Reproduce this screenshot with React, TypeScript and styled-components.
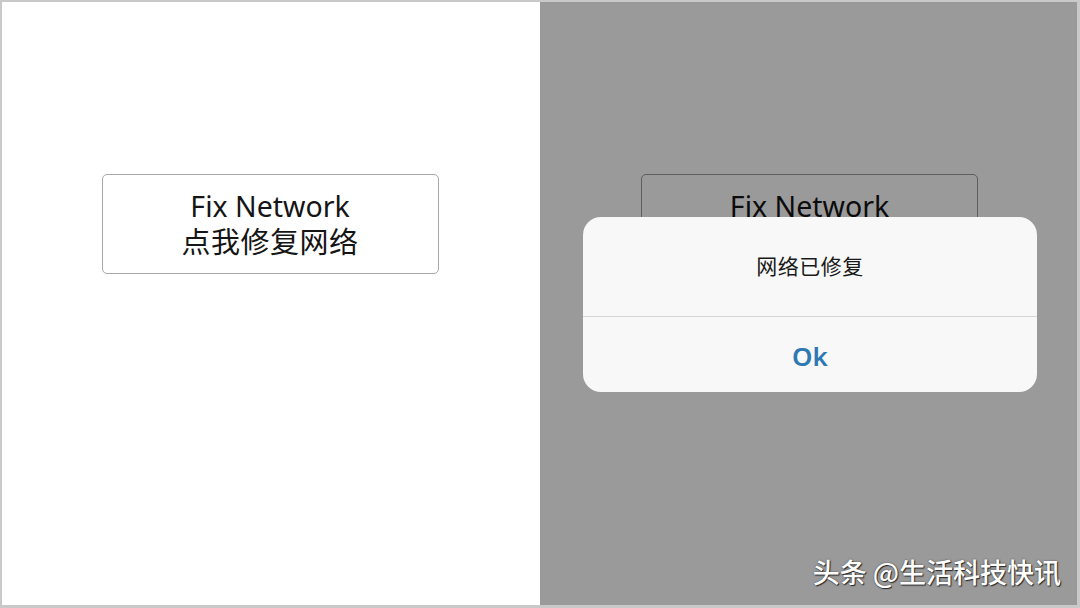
import styled, { createGlobalStyle } from 'styled-components';

const GlobalStyle = createGlobalStyle`
  html, body {
    margin: 0;
    padding: 0;
    background: #ffffff;
  }
  body {
    font-family: "Noto Sans", "Noto Sans CJK SC", sans-serif;
  }
`;

const Frame = styled.div`
  box-sizing: border-box;
  width: 1080px;
  height: 608px;
  border: 2px solid #c9c9c9;
  border-right-width: 3px;
  border-bottom-width: 3px;
  display: grid;
  grid-template-columns: 538px 1fr;
  overflow: hidden;
`;

const Panel = styled.section<{ $dimmed?: boolean }>`
  position: relative;
  display: flex;
  flex-direction: column;
  align-items: center;
  padding-top: 172px;
  background: ${({ $dimmed }) => ($dimmed ? '#9a9a9a' : '#ffffff')};
`;

const FixButton = styled.div<{ $dimmed?: boolean }>`
  box-sizing: border-box;
  width: 337px;
  height: 100px;
  margin-left: ${({ $dimmed }) => ($dimmed ? '2px' : '-2px')};
  border: 1.5px solid ${({ $dimmed }) => ($dimmed ? '#5e5e5e' : '#a8a8a8')};
  border-radius: 5px;
  display: flex;
  flex-direction: column;
  align-items: center;
  justify-content: center;
  color: ${({ $dimmed }) => ($dimmed ? '#0c0c0c' : '#151515')};
  padding-bottom: 2px;
`;

const ButtonLine = styled.span<{ $cjk?: boolean }>`
  display: block;
  font-family: ${({ $cjk }) =>
    $cjk ? '"Noto Sans CJK SC", sans-serif' : '"Noto Sans", "Noto Sans CJK SC", sans-serif'};
  font-size: ${({ $cjk }) => ($cjk ? '29px' : '28.5px')};
  line-height: 34px;
  letter-spacing: ${({ $cjk }) => ($cjk ? '0.5px' : '0')};
`;

const Dialog = styled.div`
  position: absolute;
  left: 43px;
  top: 215px;
  width: 454px;
  height: 175px;
  border-radius: 18px;
  background: #f8f8f8;
  display: flex;
  flex-direction: column;
  overflow: hidden;
`;

const DialogBody = styled.div`
  height: 100px;
  display: flex;
  align-items: center;
  justify-content: center;
  border-bottom: 1px solid #d6d6d6;
  font-family: "Noto Sans CJK SC", sans-serif;
  font-size: 21px;
  color: #1a1a1a;
  padding-bottom: 4px;
  box-sizing: border-box;
  letter-spacing: 0.5px;
`;

const DialogAction = styled.div`
  flex: 1;
  display: flex;
  align-items: center;
  justify-content: center;
  font-family: "Noto Sans", sans-serif;
  font-weight: 600;
  font-size: 26px;
  color: #2e78b3;
  padding-top: 2px;
`;

const Watermark = styled.div`
  position: absolute;
  right: 16px;
  bottom: 14px;
  font-family: "Noto Sans CJK SC", sans-serif;
  font-size: 27px;
  font-weight: 500;
  color: #ffffff;
  text-shadow: 1px 1px 1px #2a2a2a, 0 0 2px rgba(0, 0, 0, 0.5);
  white-space: nowrap;
`;

export default function App() {
  return (
    <>
      <GlobalStyle />
      <Frame>
        <Panel>
          <FixButton>
            <ButtonLine>Fix Network</ButtonLine>
            <ButtonLine $cjk>点我修复网络</ButtonLine>
          </FixButton>
        </Panel>
        <Panel $dimmed>
          <FixButton $dimmed>
            <ButtonLine>Fix Network</ButtonLine>
            <ButtonLine $cjk>点我修复网络</ButtonLine>
          </FixButton>
          <Dialog>
            <DialogBody>网络已修复</DialogBody>
            <DialogAction>Ok</DialogAction>
          </Dialog>
          <Watermark>头条 @生活科技快讯</Watermark>
        </Panel>
      </Frame>
    </>
  );
}
